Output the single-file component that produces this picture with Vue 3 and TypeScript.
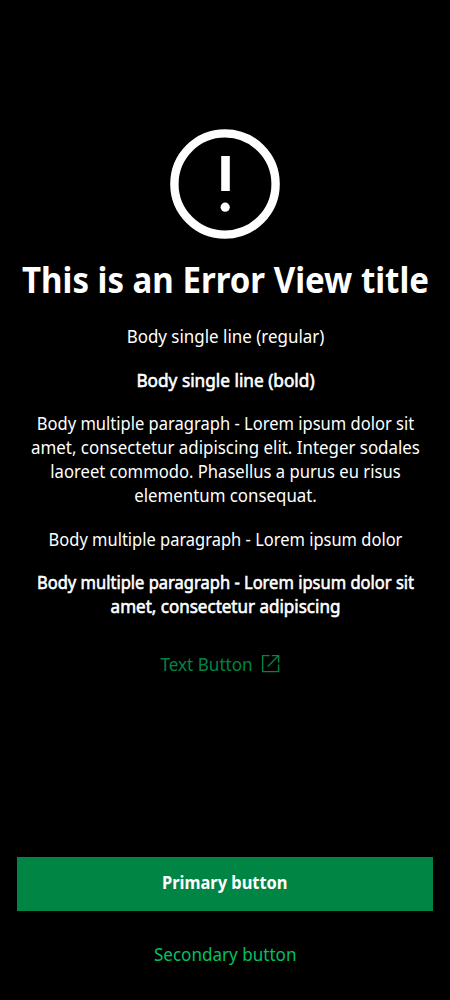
<script setup lang="ts">
interface Line {
  text: string
  stretch: number
}

interface Paragraph {
  bold: boolean
  lines: Line[]
}

const paragraphs: Paragraph[] = [
  { bold: false, lines: [{ text: 'Body single line (regular)', stretch: 0.941 }] },
  { bold: true, lines: [{ text: 'Body single line (bold)', stretch: 0.957 }] },
  {
    bold: false,
    lines: [
      { text: 'Body multiple paragraph - Lorem ipsum dolor sit', stretch: 0.918 },
      { text: 'amet, consectetur adipiscing elit. Integer sodales', stretch: 0.938 },
      { text: 'laoreet commodo. Phasellus a purus eu risus', stretch: 0.923 },
      { text: 'elementum consequat.', stretch: 0.936 },
    ],
  },
  { bold: false, lines: [{ text: 'Body multiple paragraph - Lorem ipsum dolor', stretch: 0.915 }] },
  {
    bold: true,
    lines: [
      { text: 'Body multiple paragraph - Lorem ipsum dolor sit', stretch: 0.917 },
      { text: 'amet, consectetur adipiscing', stretch: 0.945 },
    ],
  },
]
</script>

<template>
  <main class="screen">
    <section class="content">
      <svg class="alert" viewBox="0 0 110 110" aria-hidden="true">
        <circle cx="55" cy="55" r="50.6" fill="none" stroke="#fff" stroke-width="8.4" />
        <path d="M51.2 27h8.6v35h-8.6z" fill="#fff" />
        <circle cx="55.2" cy="78.2" r="4.6" fill="#fff" />
      </svg>
      <h1><span>This is an Error View title</span></h1>
      <p v-for="(p, i) in paragraphs" :key="i" :class="{ bold: p.bold }">
        <span
          v-for="line in p.lines"
          :key="line.text"
          class="line"
          :style="{ transform: `translateX(0.8px) scaleX(${line.stretch})` }"
        >{{ line.text }}</span>
      </p>
      <a class="link">
        <span>Text Button</span>
        <svg class="external" viewBox="0 0 20 20" aria-hidden="true">
          <path
            d="M8.600 1.600H1.600V17.600H17.600V10.600M10.800 1.600H17.600V8.400M17.600 1.600L6.800 12.400"
            fill="none"
            stroke="currentColor"
            stroke-width="1.4"
          />
        </svg>
      </a>
    </section>
    <footer>
      <button class="primary"><span>Primary button</span></button>
      <button class="secondary"><span>Secondary button</span></button>
    </footer>
  </main>
</template>

<style>
body {
  background: #000;
}
</style>

<style scoped>
.screen {
  box-sizing: border-box;
  height: 1000px;
  padding: 129px 17.3px 17px;
  display: flex;
  flex-direction: column;
  background: #000;
  color: #fff;
  font: 18px/24.1px "Noto Sans", "Open Sans", sans-serif;
  text-align: center;
  overflow: hidden;
}
.content {
  flex: 1;
}
.alert {
  display: block;
  width: 110px;
  height: 110px;
  margin: 0 auto;
}
h1 {
  display: flex;
  justify-content: center;
  margin: 17px 0 20.300px;
  font-size: 36px;
  line-height: 48px;
  white-space: nowrap;
}
h1 span {
  transform: translateX(0.6px) scaleX(0.917);
}
p {
  margin: 0 0 19.250px;
}
.line {
  display: block;
  white-space: nowrap;
}
.bold {
  -webkit-text-stroke: 0.6px #fff;
}
.link {
  display: flex;
  justify-content: center;
  align-items: center;
  width: 120px;
  margin: 34px auto 0;
  color: #008545;
}
.link span {
  white-space: nowrap;
  margin: 0 5px 0 -11px;
  transform: scaleX(0.95);
}
.external {
  flex: none;
  width: 20px;
  height: 20px;
}
button {
  display: block;
  width: 100%;
  height: 54.700px;
  padding: 0;
  border: 0;
  font: inherit;
}
button span {
  display: inline-block;
}
.primary {
  background: #008545;
  color: #fff;
  font-weight: 700;
}
.primary span {
  transform: translateY(-2.300px) scaleX(0.912);
}
.secondary {
  margin-top: 17px;
  background: none;
  color: #00c164;
}
.secondary span {
  transform: translateY(-2.500px) scaleX(0.948);
}
</style>
